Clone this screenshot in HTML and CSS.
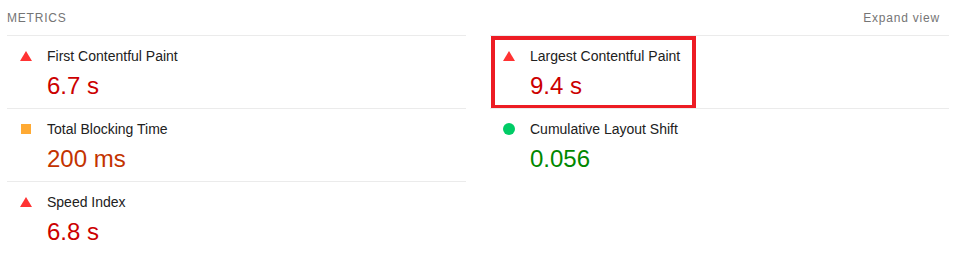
FILE: index.html
```html
<!DOCTYPE html>
<html lang="en">
<head>
    <meta charset="UTF-8">
    <title>Metrics</title>
    <link rel="stylesheet" href="styles.css">
</head>
<body>
<div class="metrics">
    <div class="metrics-header">
        <span class="metrics-title">Metrics</span>
        <span class="metrics-toggle">Expand view</span>
    </div>
    <div class="metrics-grid">
        <div class="metric">
            <div class="metric-title"><span class="icon icon-fail"></span>First Contentful Paint</div>
            <div class="metric-value fail">6.7 s</div>
        </div>
        <div class="metric">
            <div class="metric-title"><span class="icon icon-fail"></span>Largest Contentful Paint</div>
            <div class="metric-value fail">9.4 s</div>
            <div class="highlight"></div>
        </div>
        <div class="metric">
            <div class="metric-title"><span class="icon icon-average"></span>Total Blocking Time</div>
            <div class="metric-value average">200 ms</div>
        </div>
        <div class="metric">
            <div class="metric-title"><span class="icon icon-pass"></span>Cumulative Layout Shift</div>
            <div class="metric-value pass">0.056</div>
        </div>
        <div class="metric">
            <div class="metric-title"><span class="icon icon-fail"></span>Speed Index</div>
            <div class="metric-value fail">6.8 s</div>
        </div>
    </div>
</div>
</body>
</html>
```

FILE: styles.css
```css
body {
    margin: 0;
    font-family: "Liberation Sans", Arial, sans-serif;
    background-color: #ffffff;
    color: #212121;
}
.metrics {
    width: 942px;
    padding-left: 7px;
}
.metrics-header {
    height: 35px;
    display: flex;
    align-items: center;
    justify-content: space-between;
    font-size: 12px;
    color: #757575;
}
.metrics-title {
    text-transform: uppercase;
    letter-spacing: 0.8px;
}
.metrics-toggle {
    padding-right: 9px;
    letter-spacing: 0.8px;
}
.metrics-grid {
    display: grid;
    grid-template-columns: 1fr 1fr;
    column-gap: 24px;
}
.metric {
    position: relative;
    border-top: 1px solid #ebebeb;
    padding: 10px 0 7px;
    box-sizing: border-box;
    height: 73px;
}
.metric-title {
    display: flex;
    align-items: center;
    padding-left: 13px;
    font-size: 14px;
    line-height: 20px;
}
.metric-value {
    padding-left: 40px;
    margin-top: 5px;
    font-size: 24px;
    line-height: 30px;
}
.fail {
    color: #cc0000;
}
.average {
    color: #c33300;
}
.pass {
    color: #008800;
}
.icon {
    display: inline-block;
    margin-right: 15px;
    flex-shrink: 0;
}
.icon-fail {
    width: 0;
    height: 0;
    border-left: 6px solid transparent;
    border-right: 6px solid transparent;
    border-bottom: 10px solid #ff3333;
    margin-top: -1px;
}
.icon-average {
    width: 10px;
    height: 10px;
    margin-left: 1px;
    margin-right: 16px;
    background-color: #ffaa33;
}
.icon-pass {
    width: 12px;
    height: 12px;
    border-radius: 50%;
    background-color: #00cc66;
}
.highlight {
    position: absolute;
    top: 0;
    left: 1px;
    width: 205px;
    height: 73px;
    box-sizing: border-box;
    border: 4px solid #ed1c24;
}
```
